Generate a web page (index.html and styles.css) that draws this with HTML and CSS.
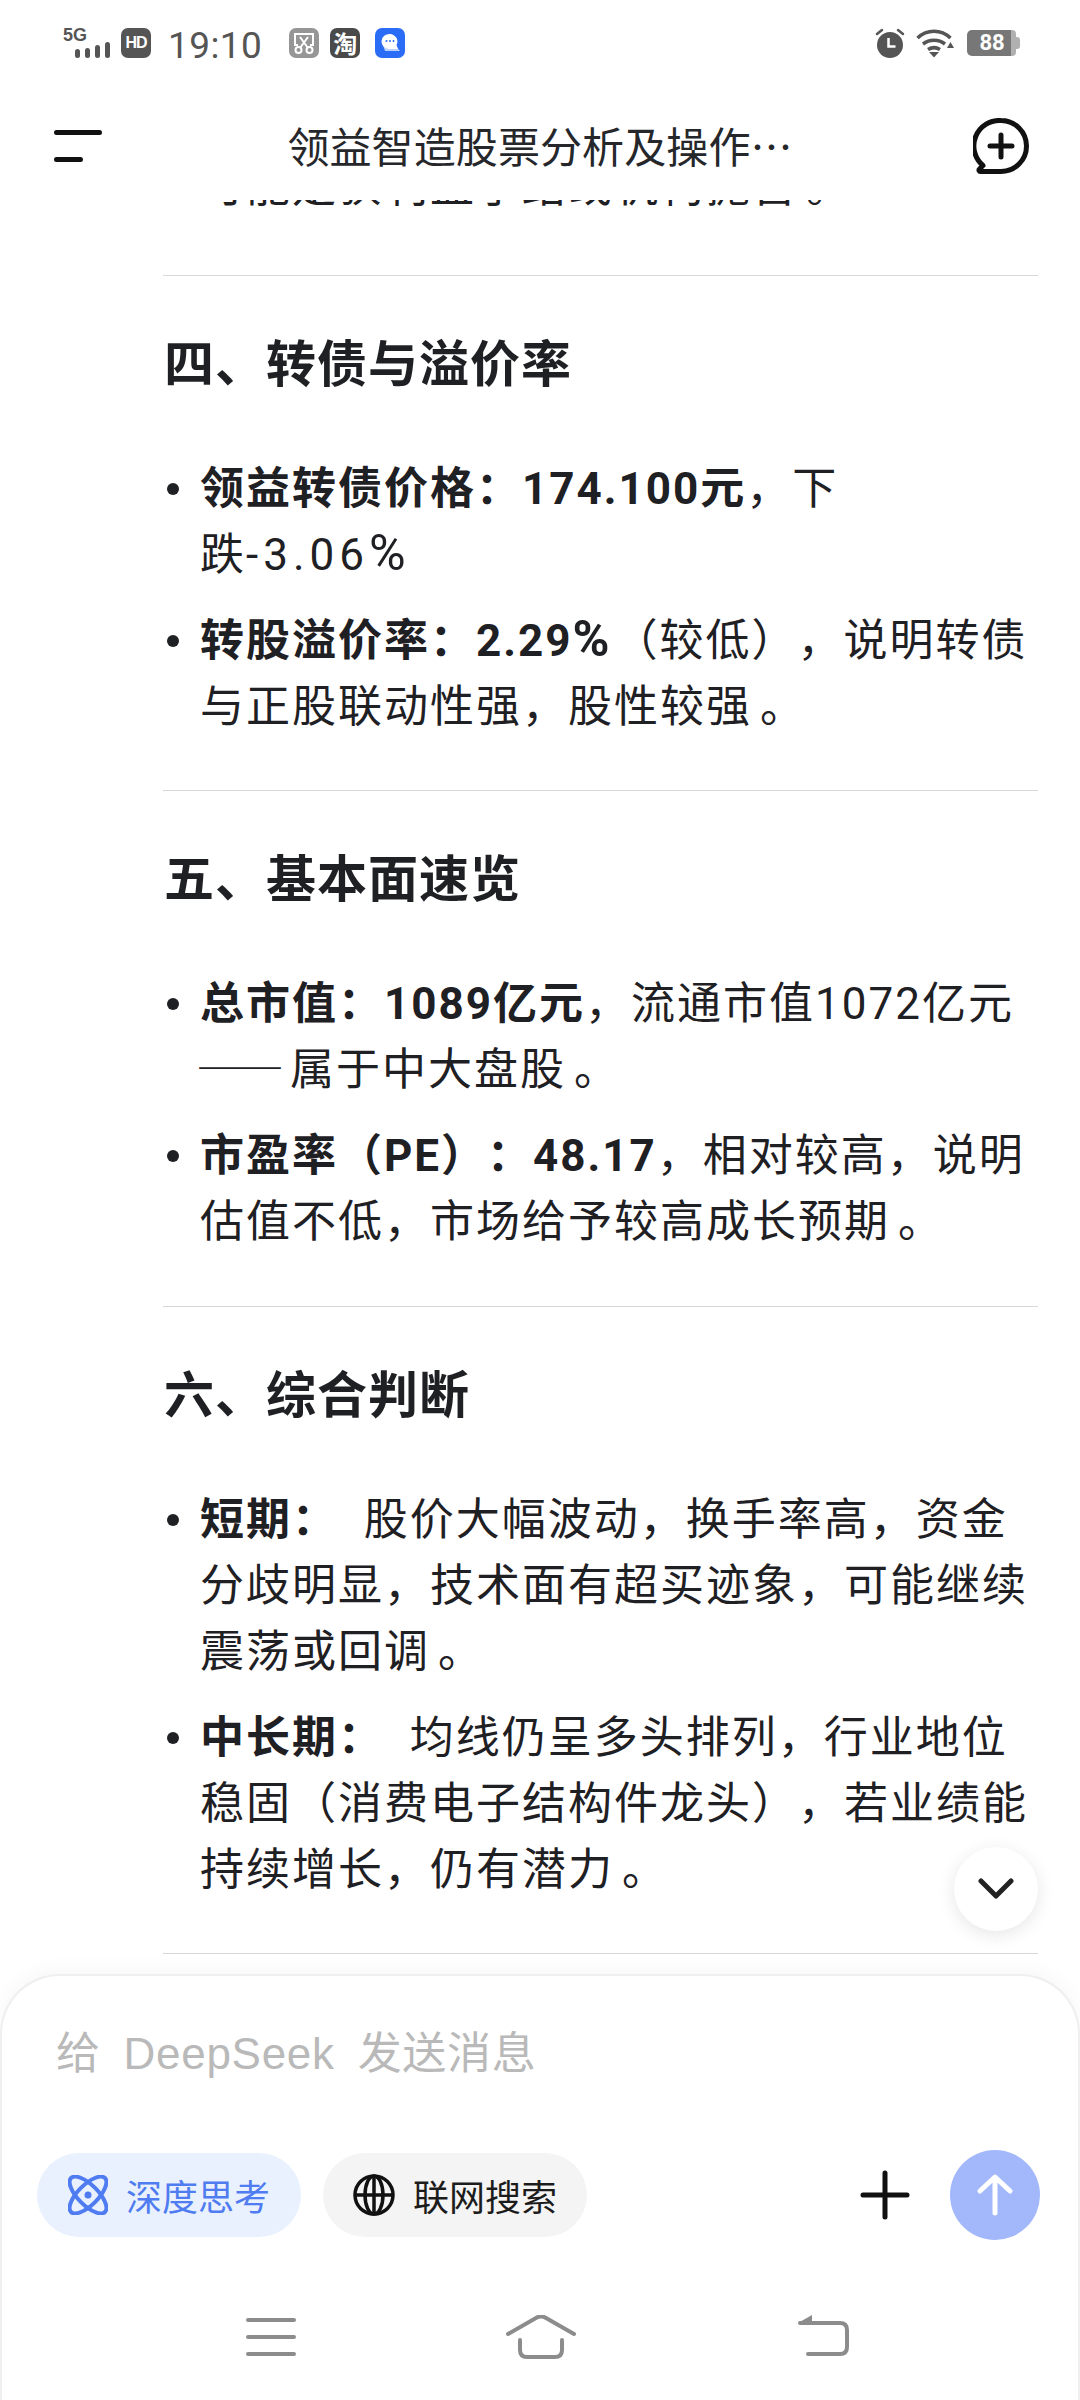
FILE: index.html
```html
<!DOCTYPE html>
<html lang="zh-CN">
    <head>
        <meta charset="UTF-8">
        <meta name="viewport" content="width=device-width, initial-scale=1.0">
        <title>DeepSeek</title>
        <link rel="stylesheet" href="styles.css">
    </head>
    <body>
        <div id="phone">
            <div class="statusbar">
                <div class="status_left">
                    <div class="signal">
                        <span class="net">5G</span>
                        <svg width="35" height="16" viewBox="0 0 35 16"><rect x="0" y="7" width="5" height="9" rx="2.5"/><rect x="10" y="6" width="5" height="10" rx="2.5"/><rect x="20" y="3" width="5" height="13" rx="2.5"/><rect x="30" y="0" width="5" height="16" rx="2.5"/></svg>
                    </div>
                    <span class="hd">HD</span>
                    <span class="time">19:10</span>
                    <div class="apps">
                        <span class="app app_gray"><svg width="24" height="24" viewBox="0 0 24 24" fill="none" stroke="#fff" stroke-width="2"><path d="M6 14H3V3h18v11h-3"/><path d="M8 6l8 11M16 6L8 17"/><circle cx="6.500" cy="19" r="3"/><circle cx="17.500" cy="19" r="3"/></svg></span>
                        <span class="app app_dark">淘</span>
                        <span class="app app_blue"><svg width="30" height="30" viewBox="0 0 30 30"><path d="M8 17h12l5 6H10z" fill="#b9d0ff"/><path d="M15 6a8 7.500 0 0 0-1 15h9l-1.500-4A8 7.500 0 0 0 15 6z" fill="#fff"/><circle cx="11.500" cy="13" r="1" fill="#2a6cf6"/><circle cx="15" cy="13" r="1" fill="#2a6cf6"/><circle cx="18.500" cy="13" r="1" fill="#2a6cf6"/></svg></span>
                    </div>
                </div>
                <div class="status_right">
                    <svg width="30" height="30" viewBox="0 0 30 30"><path d="M2 6l5-4M28 6l-5-4" stroke="#555" stroke-width="2.500" stroke-linecap="round"/><circle cx="15" cy="17" r="13" fill="#555"/><path d="M13.500 10v8.500h7" stroke="#fff" stroke-width="2.500" fill="none"/></svg>
                    <svg width="38" height="30" viewBox="0 0 38 30" fill="none" stroke="#555" stroke-width="3.500"><path d="M1.500 10C11 1 25 1 34.500 10"/><path d="M7 16c6.500-5 15.500-5 22 0"/><path d="M12 21.500c4-2.500 8-2.500 12 0"/><path d="M13 24h10l-5 5.500z" fill="#555" stroke="none"/><path d="M31 20h7l-3.500-6z" fill="#555" stroke="none"/></svg>
                    <div class="battery"><span class="battery_fill">88</span><span class="battery_cap"></span></div>
                </div>
            </div>
            <div class="header">
                <svg width="48" height="32" viewBox="0 0 48 32"><path d="M2.500 2.500h43M2.500 29.500h24" stroke="#111" stroke-width="5" stroke-linecap="round"/></svg>
                <div class="title">领益智造股票分析及操作…</div>
                <svg width="56" height="56" viewBox="0 0 56 56" fill="none" stroke="#111" stroke-width="5"><path d="M28 2.500a25.500 25.500 0 1 1 0 51H7.500c-1.500 0-2-1.500-1-2.500l3.500-3.500A25.500 25.500 0 0 1 28 2.500z" stroke-linejoin="round"/><path d="M17 28h22M28 17v22" stroke-linecap="round"/></svg>
            </div>
            <div class="chat">
                <div class="article">
                    <p class="cutoff">可能是获利盘了结或机构抛售<span class="stop">。</span></p>
                    <hr>
                    <h3>四、转债与溢价率</h3>
                    <ul>
                        <li><b>领益转债价格：174.100元</b>，下<br>跌<span class="wide">-3.06<span class="pct">%</span></span></li>
                        <li><b>转股溢价率：2.29<span class="pct">%</span></b>（较低），说明转债与正股联动性强，股性较强<span class="stop">。</span></li>
                    </ul>
                    <hr>
                    <h3>五、基本面速览</h3>
                    <ul>
                        <li><b>总市值：1089亿元</b>，流通市值1072亿元<span class="dash">——</span>属于中大盘股<span class="stop">。</span></li>
                        <li><b>市盈率（PE）：48.17</b>，相对较高，说明估值不低，市场给予较高成长预期<span class="stop">。</span></li>
                    </ul>
                    <hr>
                    <h3>六、综合判断</h3>
                    <ul>
                        <li><b>短期：</b>&nbsp; 股价大幅波动，换手率高，资金分歧明显，技术面有超买迹象，可能继续震荡或回调<span class="stop">。</span></li>
                        <li><b>中长期：</b>&nbsp; 均线仍呈多头排列，行业地位稳固（消费电子结构件龙头），若业绩能持续增长，仍有潜力<span class="stop">。</span></li>
                    </ul>
                    <hr>
                </div>
                <div class="scroll_down">
                    <svg width="36" height="24" viewBox="0 0 36 24" fill="none" stroke="#222" stroke-width="5" stroke-linecap="round" stroke-linejoin="round"><path d="M3 4l15 15L33 4"/></svg>
                </div>
            </div>
            <div class="composer">
                <div class="placeholder">给 DeepSeek 发送消息</div>
                <div class="toolbar">
                    <div class="chip chip_on">
                        <svg width="40" height="40" viewBox="0 0 40 40" fill="none" stroke="#4f7cf0" stroke-width="4"><ellipse cx="20" cy="20" rx="24" ry="10" transform="rotate(45 20 20)"/><ellipse cx="20" cy="20" rx="24" ry="10" transform="rotate(-45 20 20)"/><circle cx="20" cy="20" r="3.500" fill="#4f7cf0" stroke="none"/></svg>
                        <span>深度思考</span>
                    </div>
                    <div class="chip">
                        <svg width="42" height="42" viewBox="0 0 42 42" fill="none" stroke="#111" stroke-width="3.500"><circle cx="21" cy="21" r="19"/><ellipse cx="21" cy="21" rx="9" ry="19"/><path d="M2 21h38M21 2v38"/></svg>
                        <span>联网搜索</span>
                    </div>
                    <svg class="plus_icon" width="50" height="50" viewBox="0 0 50 50"><path d="M3 25h44M25 3v44" stroke="#111" stroke-width="5" stroke-linecap="round"/></svg>
                    <div class="send">
                        <svg width="36" height="42" viewBox="0 0 36 42" fill="none" stroke="#fff" stroke-width="5" stroke-linecap="round" stroke-linejoin="round"><path d="M18 39V4M3 17L18 3l15 14"/></svg>
                    </div>
                </div>
                <div class="navbar">
                    <svg width="50" height="42" viewBox="0 0 50 42"><path d="M2 5h46M2 22h46M2 39h46" stroke="#8c8c8c" stroke-width="4" stroke-linecap="round"/></svg>
                    <svg class="nav_home" width="70" height="44" viewBox="0 0 70 44" fill="none" stroke="#8c8c8c" stroke-width="4" stroke-linecap="round"><path d="M2 19L30 3q5-3 10 0l28 16"/><path d="M14 25v10q0 7 7 7h28q7 0 7-7V25"/></svg>
                    <svg width="52" height="42" viewBox="0 0 52 42" fill="none" stroke="#8c8c8c" stroke-width="4" stroke-linecap="round"><path d="M2 8h40q7 0 7 7v17q0 7-7 7H10"/><path d="M0 8l14-8v8z" fill="#8c8c8c" stroke="none"/></svg>
                </div>
            </div>
        </div>
    </body>
</html>
```
FILE: styles.css
```css
*{
    box-sizing: border-box;
}
html,body{
    margin: 0;
    padding: 0;
    background: #fff;
}
#phone{
    width: 1080px;
    height: 2400px;
    display: flex;
    flex-direction: column;
    overflow: hidden;
    color: #1f2024;
    font-family: "Noto Sans CJK SC", "Noto Sans", sans-serif;
    text-spacing-trim: space-all;
}
.statusbar{
    height: 86px;
    padding: 28px 60px 0 63px;
    display: flex;
    justify-content: space-between;
    color: #555;
    flex-shrink: 0;
}
.status_left,.status_right{
    display: flex;
    align-items: flex-start;
}
.status_right{
    gap: 11px;
}
.signal{
    width: 47px;
    height: 30px;
    margin-right: 11px;
    display: flex;
    flex-direction: column;
}
.signal svg{
    align-self: flex-end;
    fill: #555;
}
.net{
    height: 14px;
    font: bold 18px/14px "Liberation Sans", sans-serif;
}
.hd{
    width: 30px;
    height: 30px;
    background: #555;
    color: #fff;
    border-radius: 7px;
    font: bold 16px/30px "Liberation Sans", sans-serif;
    letter-spacing: -1px;
    text-align: center;
}
.time{
    font: 37px/36px "Roboto", sans-serif;
    margin-left: 17px;
    letter-spacing: 0.4px;
}
.apps{
    display: flex;
    gap: 11px;
    margin-left: 27px;
}
.app{
    width: 30px;
    height: 30px;
    border-radius: 7px;
    display: flex;
    align-items: center;
    justify-content: center;
    color: #fff;
    font-size: 24px;
    font-weight: bold;
    line-height: 30px;
}
.app_gray{
    background: #969696;
}
.app_dark{
    background: #4a4a4a;
}
.app_blue{
    background: #2a6cf6;
    margin-left: 4px;
}
.battery{
    display: flex;
    align-items: center;
    margin-top: 2px;
    margin-left: 2px;
}
.battery_fill{
    width: 44px;
    height: 26px;
    padding-left: 6px;
    background: #777;
    color: #fff;
    border-radius: 5px 0 0 5px;
    font: bold 22px/26px "Roboto", sans-serif;
    text-align: center;
}
.battery_cap{
    width: 5px;
    height: 26px;
    background: #b0b0b0;
    border-radius: 0 4px 4px 0;
}
.battery:after{
    content: "";
    width: 4px;
    height: 12px;
    background: #b0b0b0;
    border-radius: 0 3px 3px 0;
}
.header{
    height: 114px;
    padding: 6px 51px 0 54px;
    display: flex;
    align-items: center;
    justify-content: space-between;
    flex-shrink: 0;
    background: #fff;
}
.title{
    font-size: 42px;
    letter-spacing: 0.1px;
    color: #26272b;
    margin-left: 5px;
    margin-bottom: 4px;
}
.chat{
    flex: 1;
    position: relative;
    overflow: hidden;
    min-height: 0;
}
.article{
    padding: 0 42px 0 163px;
    margin-top: -46px;
}
.cutoff{
    margin: 0;
    padding-left: 37px;
    font-family: "Roboto", "Noto Sans CJK SC", sans-serif;
    font-size: 44px;
    line-height: 66px;
    letter-spacing: 2px;
    height: 70px;
}
hr{
    border: 0;
    border-top: 1.5px solid #d8d8d8;
    margin: 50.5px 0 0;
}
h3{
    margin: 0;
    padding: 50px 0 0 1px;
    font-size: 50px;
    line-height: 68px;
    font-weight: bold;
    letter-spacing: 1px;
}
ul{
    list-style: none;
    margin: 0;
    padding: 62px 0 0 0;
}
li{
    position: relative;
    padding-left: 37px;
    font-family: "Roboto", "Noto Sans CJK SC", sans-serif;
    font-size: 44px;
    line-height: 66px;
    letter-spacing: 2px;
    margin-bottom: 20px;
}
li:before{
    content: "";
    position: absolute;
    left: 4px;
    top: 27px;
    width: 12px;
    height: 12px;
    border-radius: 50%;
    background: #1f2024;
}
li b{
    font-weight: bold;
}
.wide{
    letter-spacing: 5px;
}
.pct{
    font-size: 50px;
    line-height: 1;
    letter-spacing: 4px;
}
.dash{
    font-family: "Noto Sans CJK SC", sans-serif;
    line-height: 1;
    margin-left: -4px;
    letter-spacing: 6px;
}
.stop{
    margin-left: 8px;
    margin-right: -8px;
}
.scroll_down{
    position: absolute;
    right: 42px;
    bottom: 43px;
    width: 84px;
    height: 84px;
    border-radius: 50%;
    background: #fff;
    box-shadow: 0 4px 18px rgba(0,0,0,0.1);
    display: flex;
    align-items: center;
    justify-content: center;
}
.composer{
    height: 426px;
    flex-shrink: 0;
    border: 2px solid #efefef;
    border-bottom: 0;
    border-radius: 60px 60px 0 0;
    background: #fff;
    box-shadow: 0 -6px 18px rgba(0,0,0,0.03);
    padding: 0 38px 0 35px;
    position: relative;
}
.placeholder{
    padding: 48px 0 0 19px;
    font-family: "Liberation Sans", "Noto Sans CJK SC", sans-serif;
    font-size: 44px;
    line-height: 60px;
    letter-spacing: 0.7px;
    word-spacing: 10px;
    color: #b9b9b9;
}
.toolbar{
    display: flex;
    align-items: center;
    margin-top: 66px;
    gap: 22px;
}
.chip{
    height: 84px;
    width: 264px;
    border-radius: 42px;
    background: #f4f4f4;
    display: flex;
    align-items: center;
    justify-content: center;
    gap: 18px;
    font-size: 36px;
    color: #1c1c1c;
}
.chip_on{
    background: #e9f1fe;
    color: #4f7cf0;
}
.plus_icon{
    margin-left: auto;
    margin-right: 18px;
}
.send{
    width: 90px;
    height: 90px;
    border-radius: 50%;
    background: #a2b8fb;
    display: flex;
    align-items: center;
    justify-content: center;
}
.navbar{
    display: flex;
    align-items: flex-start;
    margin-top: 75px;
    padding-left: 209px;
}
.nav_home{
    margin: 0 222px 0 210px;
}
```
